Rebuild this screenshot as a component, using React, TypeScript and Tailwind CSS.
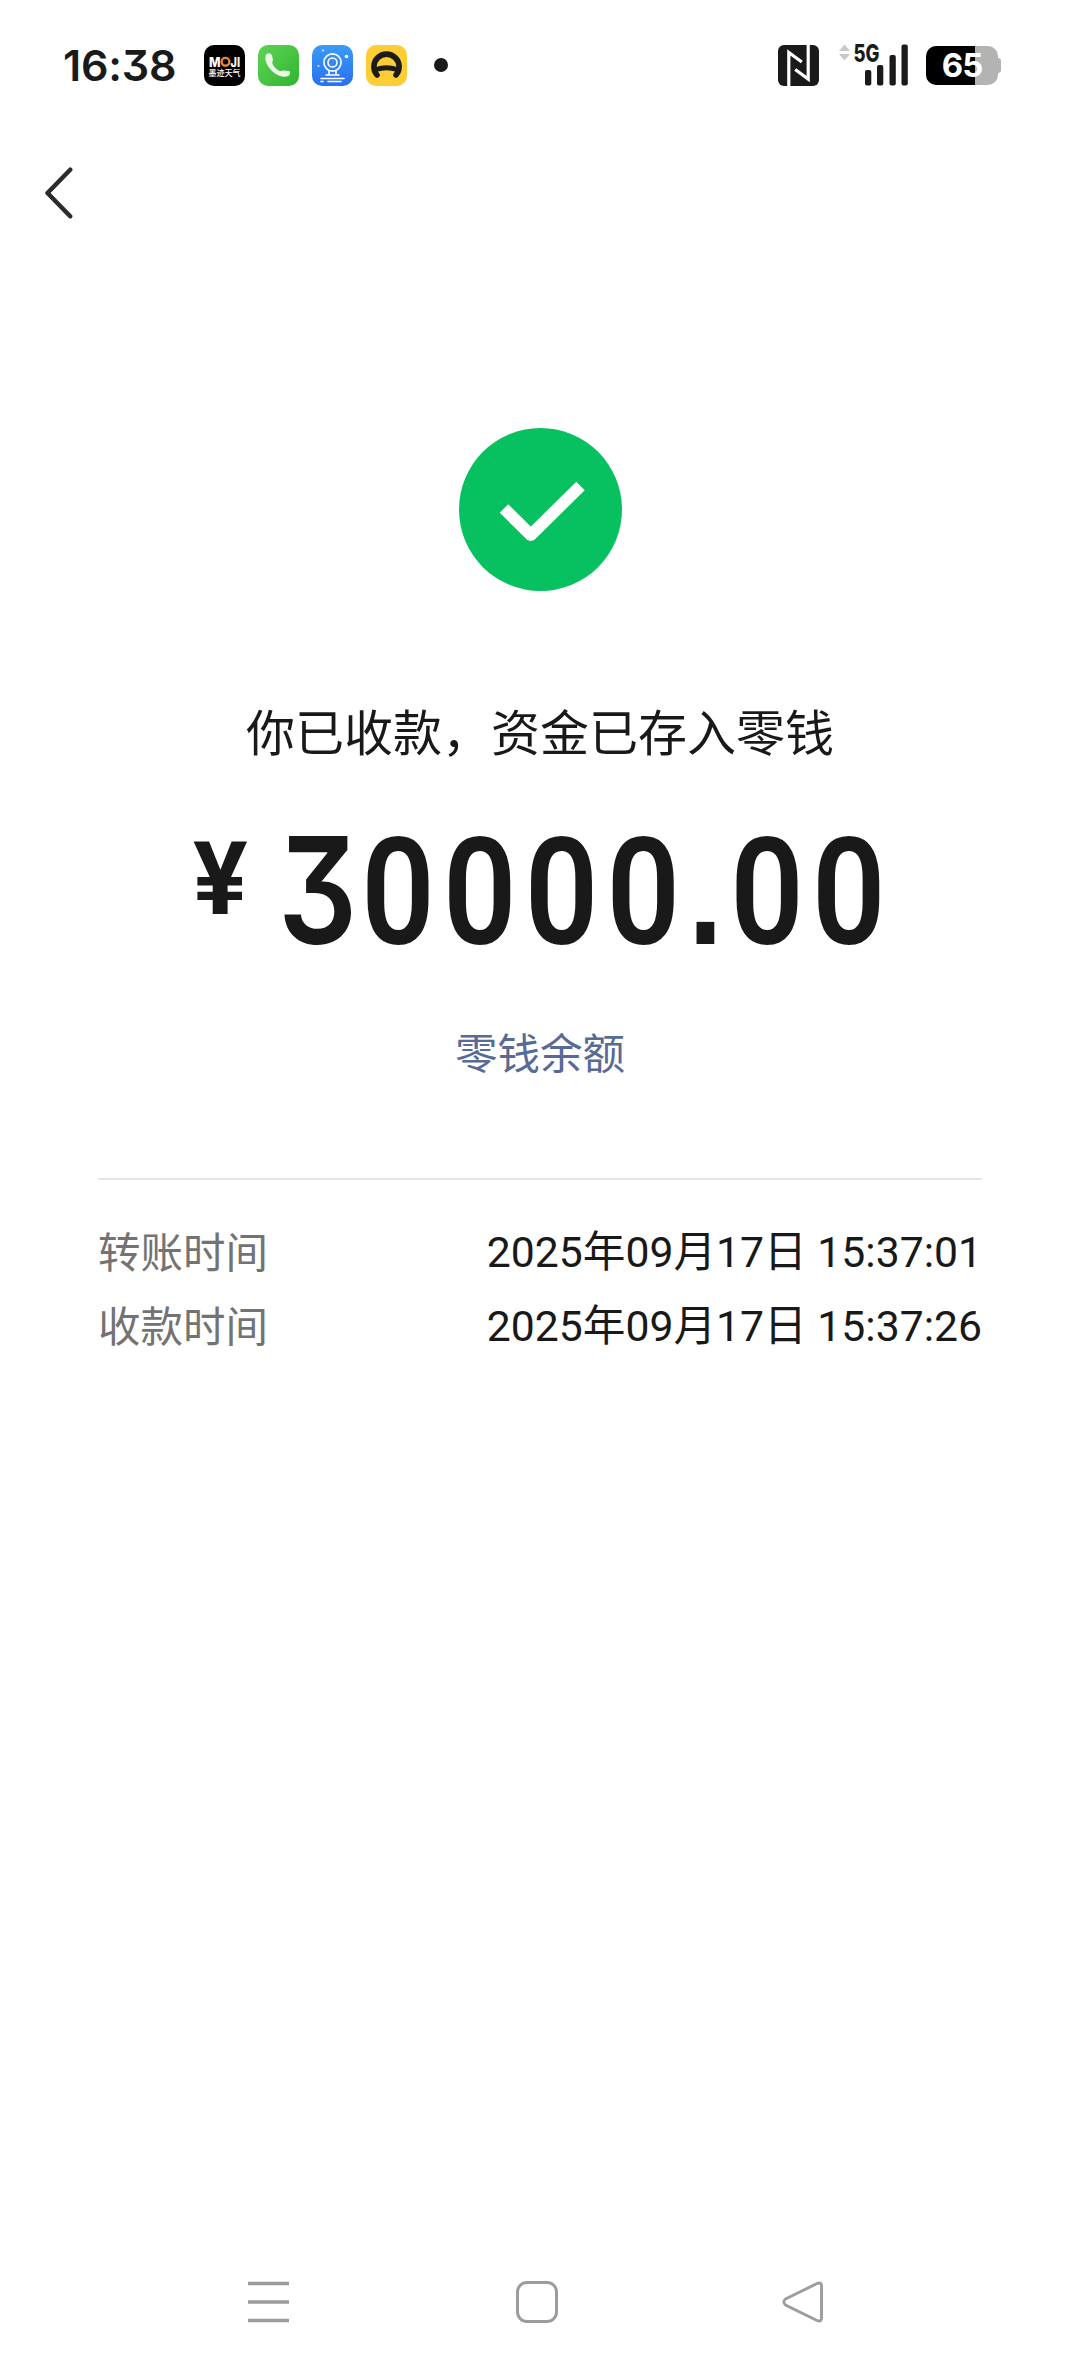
import type { ReactNode } from 'react';

interface TimeRowProps {
  label: string;
  value: string;
}

const rows: TimeRowProps[] = [
  { label: '转账时间', value: '2025年09月17日 15:37:01' },
  { label: '收款时间', value: '2025年09月17日 15:37:26' },
];

const AppIcon = ({ className, children }: { className: string; children: ReactNode }) => (
  <div className={`h-[41px] w-[41px] overflow-hidden rounded-[10px] ${className}`}>
    <svg width="41" height="41" viewBox="0 0 41 41" fill="none">
      {children}
    </svg>
  </div>
);

const NotificationIcons = () => (
  <div className="ml-[30px] flex items-center gap-[13px]">
    <AppIcon className="bg-black">
      <g fill="#fff" fontFamily="Inter, sans-serif" fontWeight="800" fontSize="13">
        <text x="5" y="21.5" textLength="11.5" lengthAdjust="spacingAndGlyphs">M</text>
        <text x="26.5" y="21.5" textLength="9.5" lengthAdjust="spacingAndGlyphs">JI</text>
      </g>
      <circle cx="21.5" cy="16.8" r="3.9" stroke="#e8843c" strokeWidth="2.4" />
      <text
        x="4.5"
        y="31"
        fill="#fff"
        fontFamily="'Noto Sans CJK SC', sans-serif"
        fontWeight="500"
        fontSize="8"
        textLength="32"
      >
        墨迹天气
      </text>
    </AppIcon>
    <AppIcon className="bg-gradient-to-br from-[#5fd357] to-[#2db52d]">
      <path
        d="M8 9.500c2-2 5.300-1.500 6 1l.9 4.300c.2 1.500-.9 2-.6 3.200 1 3.500 4.300 6.700 7.600 8 1.500.5 2.200-.6 3.700-.6l5.400.6c1.600.4 1.400 3.500-.5 5-5 2.300-12.300-.6-17-5.500C8.500 20.500 6 13.500 8 9.500Z"
        fill="#e9f8e6"
      />
    </AppIcon>
    <AppIcon className="bg-gradient-to-b from-[#3a9bf5] to-[#2b6ff0]">
      <g stroke="#fff" strokeWidth="1.6" strokeLinecap="round">
        <circle cx="20.5" cy="17.5" r="8.6" />
        <circle cx="20.5" cy="17.5" r="4.5" />
        <path d="M17 26v3.500M24 26v3.500M14 30h13M9 33.500h23M16 36.500h13M9 36.500h2" />
      </g>
      <circle cx="34.5" cy="11.5" r="1.8" fill="#fff" />
      <circle cx="11" cy="5.5" r="1.1" fill="#cfe6ff" />
      <circle cx="6.5" cy="21" r="1.1" fill="#cfe6ff" />
    </AppIcon>
    <AppIcon className="bg-[#fdcd35]">
      <path d="M11 30A12.600 12.600 0 1 1 30 30" stroke="#1d1b18" strokeWidth="5.600" strokeLinecap="round" />
      <path d="M10 24.500q10.500-3.500 21 0" stroke="#1d1b18" strokeWidth="5" />
    </AppIcon>
  </div>
);

const Signal = () => (
  <svg className="ml-[19px] overflow-visible" width="72" height="42" viewBox="837 44 72 42">
    <path d="M843.500 44.500 849 51h-11ZM843.500 60.500 838 54h11Z" fill="#c9c9c9" />
    <text
      x="852.5"
      y="61.5"
      fill="#1a1a1a"
      fontFamily="Inter, sans-serif"
      fontWeight="800"
      fontSize="24"
      textLength="26"
      lengthAdjust="spacingAndGlyphs"
    >
      5G
    </text>
    <g fill="#1a1a1a">
      <rect x="864" y="70" width="6.3" height="15.5" rx="2" />
      <rect x="876" y="65" width="6.3" height="20.5" rx="2" />
      <rect x="888.5" y="55" width="6.3" height="30.5" rx="2" />
      <rect x="900.5" y="44.5" width="6.3" height="41" rx="2" />
    </g>
  </svg>
);

const Battery = () => (
  <div className="ml-4 flex items-center">
    <div className="flex h-[39px] w-[72px] items-center justify-center rounded-[10px] bg-[linear-gradient(90deg,#000_49px,#b3b3b3_49px)]">
      <span className="font-['Inter',sans-serif] text-[33px] leading-none font-bold tracking-[-1px] text-white">65</span>
    </div>
    <div className="h-[15px] w-[3px] rounded-r-full bg-[#b3b3b3]" />
  </div>
);

const StatusBar = () => (
  <div className="flex h-[130px] items-center pr-[79px] pl-[63px]">
    <span className="w-[111px] font-['Inter',sans-serif] text-[43px] leading-none font-semibold tracking-[-0.2px] whitespace-nowrap text-[#1a1a1a] [font-feature-settings:'cv09']">
      16:38
    </span>
    <NotificationIcons />
    <div className="ml-[27px] h-[14px] w-[14px] rounded-full bg-[#1a1a1a]" />
    <div className="ml-auto flex items-center">
      <svg width="41" height="41" viewBox="0 0 41 41" fill="none">
        <rect width="41" height="41" rx="6" fill="#1a1a1a" />
        <path d="M10.800 41V7.500l13 9.500M30.200 0v34l-13-9.500" stroke="#fff" strokeWidth="3.200" />
      </svg>
      <Signal />
      <Battery />
    </div>
  </div>
);

// Condensed digits: each one takes an 82px cell, the point takes half of it.
const Amount = () => (
  <div className="mt-[50px] flex h-[140px] w-full items-start pl-[193px] whitespace-nowrap text-[#191919]">
    <span className="w-[85px] text-[102px] leading-[116px] font-bold">¥</span>
    <span className="text-[148px] leading-[140px] font-semibold">
      <span className="inline-block w-[79px] origin-left scale-x-[0.84] font-['Inter',sans-serif] [font-feature-settings:'cv09']">
        3
      </span>
      <span className="inline-block w-[328px] origin-left scale-x-[0.87] pl-[5px] tracking-[9.4px]">0000</span>
      <span className="inline-block w-[41px] scale-x-[0.85] text-center font-['Liberation_Sans',sans-serif] font-bold">.</span>
      <span className="inline-block w-[164px] origin-left scale-x-[0.87] pl-[5px] tracking-[9.4px]">00</span>
    </span>
  </div>
);

const TimeRow = ({ label, value }: TimeRowProps) => (
  <div className="flex h-[74px] items-center justify-between">
    <span className="pt-px text-[42.5px] text-[#737373]">{label}</span>
    <span className="pb-[3px] text-[#191919]">{value}</span>
  </div>
);

const NavigationBar = () => (
  <div className="mt-auto flex h-[149px] items-center justify-between pr-[256px] pl-[247px]">
    <svg width="42" height="42" viewBox="0 0 42 42" fill="none">
      <path d="M1 2.500h41M1 21h41M1 39.500h41" stroke="#9c9c9c" strokeWidth="3.600" />
    </svg>
    <div className="ml-[3px] h-[42px] w-[42px] rounded-[11px] border-[3px] border-[#9c9c9c]" />
    <svg width="42" height="42" viewBox="0 0 42 42" fill="none">
      <path
        d="M3.500 18 35.500 2.300q4-1.300 4 2.700v32q0 4-4 2.700L3.500 24q-3.300-3 0-6Z"
        stroke="#9c9c9c"
        strokeWidth="2.900"
      />
    </svg>
  </div>
);

export default function App() {
  return (
    <div className="flex h-[2376px] w-[1080px] flex-col bg-white font-['Roboto','Noto_Sans_CJK_SC',sans-serif]">
      <StatusBar />
      <header className="flex h-[126px] items-center pl-11">
        <svg width="30" height="52" viewBox="0 0 30 52" fill="none">
          <path d="M26.200 2.700 3.500 26l22.700 23.300" stroke="#2b2b2b" strokeWidth="4.500" strokeLinecap="round" strokeLinejoin="round" />
        </svg>
      </header>

      <main className="flex flex-col items-center">
        <div className="mt-[172px] h-[163px] w-[163px] rounded-full bg-[#07c160]">
          <svg width="163" height="163" viewBox="0 0 163 163" fill="none">
            <path d="M45 80.500 71.800 107l49.700-49" stroke="#fff" strokeWidth="12" strokeLinejoin="round" />
          </svg>
        </div>

        <h1 className="mt-[108px] text-[49px] leading-[72px] font-normal text-[#191919]">你已收款，资金已存入零钱</h1>

        <Amount />

        <a className="mt-[63px] text-[42.5px] leading-[62px] text-[#576b95]">零钱余额</a>
      </main>

      <section className="mx-[98px] mt-[92px] border-t-2 border-[#e5e5e5] pt-[37px] text-[42.7px] leading-none">
        {rows.map((row) => (
          <TimeRow key={row.label} {...row} />
        ))}
      </section>

      <NavigationBar />
    </div>
  );
}
